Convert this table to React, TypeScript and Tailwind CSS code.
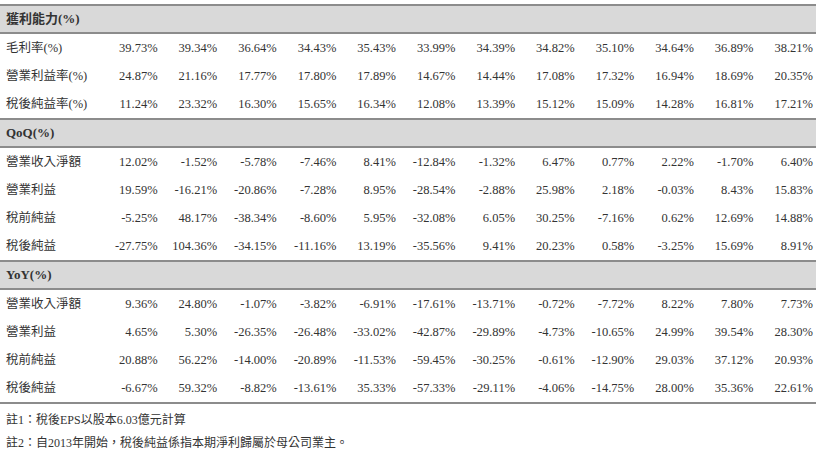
import React from "react";

type Row = { label: string; values: string[] };
type Section = { title: string; rows: Row[] };

const sections: Section[] = [
  {
    title: "獲利能力(%)",
    rows: [
      { label: "毛利率(%)", values: ["39.73%", "39.34%", "36.64%", "34.43%", "35.43%", "33.99%", "34.39%", "34.82%", "35.10%", "34.64%", "36.89%", "38.21%"] },
      { label: "營業利益率(%)", values: ["24.87%", "21.16%", "17.77%", "17.80%", "17.89%", "14.67%", "14.44%", "17.08%", "17.32%", "16.94%", "18.69%", "20.35%"] },
      { label: "稅後純益率(%)", values: ["11.24%", "23.32%", "16.30%", "15.65%", "16.34%", "12.08%", "13.39%", "15.12%", "15.09%", "14.28%", "16.81%", "17.21%"] },
    ],
  },
  {
    title: "QoQ(%)",
    rows: [
      { label: "營業收入淨額", values: ["12.02%", "-1.52%", "-5.78%", "-7.46%", "8.41%", "-12.84%", "-1.32%", "6.47%", "0.77%", "2.22%", "-1.70%", "6.40%"] },
      { label: "營業利益", values: ["19.59%", "-16.21%", "-20.86%", "-7.28%", "8.95%", "-28.54%", "-2.88%", "25.98%", "2.18%", "-0.03%", "8.43%", "15.83%"] },
      { label: "稅前純益", values: ["-5.25%", "48.17%", "-38.34%", "-8.60%", "5.95%", "-32.08%", "6.05%", "30.25%", "-7.16%", "0.62%", "12.69%", "14.88%"] },
      { label: "稅後純益", values: ["-27.75%", "104.36%", "-34.15%", "-11.16%", "13.19%", "-35.56%", "9.41%", "20.23%", "0.58%", "-3.25%", "15.69%", "8.91%"] },
    ],
  },
  {
    title: "YoY(%)",
    rows: [
      { label: "營業收入淨額", values: ["9.36%", "24.80%", "-1.07%", "-3.82%", "-6.91%", "-17.61%", "-13.71%", "-0.72%", "-7.72%", "8.22%", "7.80%", "7.73%"] },
      { label: "營業利益", values: ["4.65%", "5.30%", "-26.35%", "-26.48%", "-33.02%", "-42.87%", "-29.89%", "-4.73%", "-10.65%", "24.99%", "39.54%", "28.30%"] },
      { label: "稅前純益", values: ["20.88%", "56.22%", "-14.00%", "-20.89%", "-11.53%", "-59.45%", "-30.25%", "-0.61%", "-12.90%", "29.03%", "37.12%", "20.93%"] },
      { label: "稅後純益", values: ["-6.67%", "59.32%", "-8.82%", "-13.61%", "35.33%", "-57.33%", "-29.11%", "-4.06%", "-14.75%", "28.00%", "35.36%", "22.61%"] },
    ],
  },
];

export default function App() {
  return (
    <div
      className="w-[819px] h-[453px] bg-white text-[#333] overflow-hidden pt-[4px]"
      style={{ fontFamily: '"Liberation Serif", "Noto Sans CJK TC", serif' }}
    >
      <div className="w-[816px] border-b-2 border-[#8c8c8c]">
        {sections.map((s) => (
          <div key={s.title}>
            {/* section header */}
            <div className="h-[30px] flex items-center px-[6px] bg-[#d9d9d9] border-y-2 border-[#8c8c8c] font-bold text-[13px]">
              {s.title}
            </div>
            {s.rows.map((r) => (
              <div
                key={r.label}
                className="h-[28px] grid grid-cols-[101px_repeat(12,1fr)] items-center text-[12.5px]"
              >
                <div className="pl-[6px] whitespace-nowrap">{r.label}</div>
                {r.values.map((v, i) => (
                  <div key={i} className="text-right pr-[3px] whitespace-nowrap">
                    {v}
                  </div>
                ))}
              </div>
            ))}
          </div>
        ))}
      </div>

      {/* notes */}
      <div className="pl-[6px] pt-[5px] text-[12px] leading-[23px]">
        <div>註1：稅後EPS以股本6.03億元計算</div>
        <div>註2：自2013年開始，稅後純益係指本期淨利歸屬於母公司業主。</div>
      </div>
    </div>
  );
}
